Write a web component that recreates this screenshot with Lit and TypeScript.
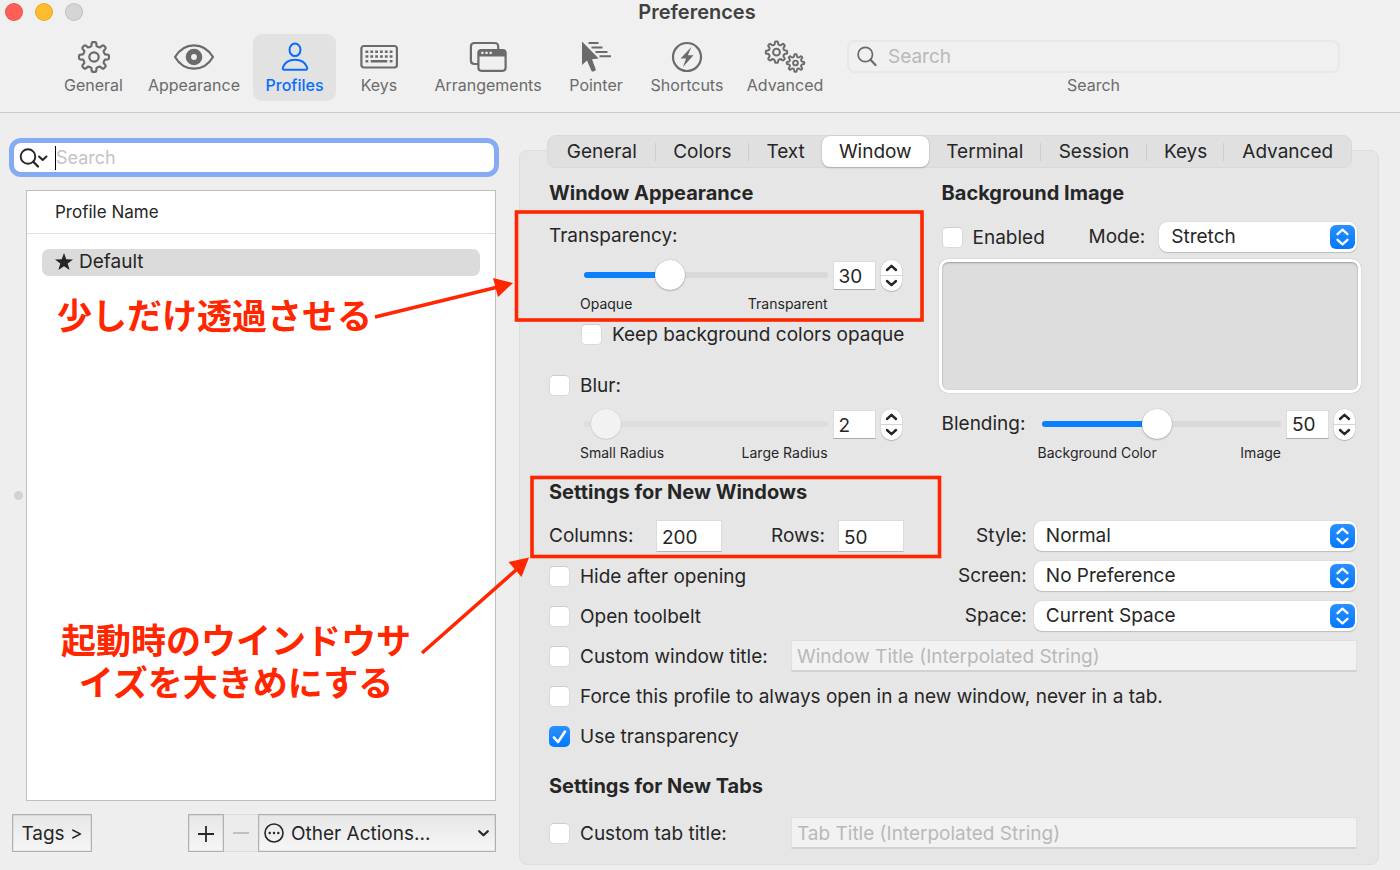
import { LitElement, html, css, svg, nothing, type TemplateResult } from "lit";
import { customElement, property, state } from "lit/decorators.js";
import { classMap } from "lit/directives/class-map.js";
import { styleMap } from "lit/directives/style-map.js";

/** Outline of a cog wheel with rounded teeth. */
function gear(cx: number, cy: number, outer: number, inner: number, teeth = 8): string {
  const step = (Math.PI * 2) / teeth;
  const at = (r: number, a: number) => `${(cx + r * Math.sin(a)).toFixed(2)} ${(cy - r * Math.cos(a)).toFixed(2)}`;
  let d = "";
  for (let i = 0; i < teeth; i++) {
    const a = i * step;
    d += `${i ? "L" : "M"}${at(inner, a - step * 0.29)}`;
    d += `L${at(outer - 1, a - step * 0.21)}Q${at(outer, a - step * 0.18)} ${at(outer, a - step * 0.1)}`;
    d += `L${at(outer, a + step * 0.1)}Q${at(outer, a + step * 0.18)} ${at(outer - 1, a + step * 0.21)}`;
    d += `L${at(inner, a + step * 0.29)}Q${at(inner - 1, a + step * 0.5)} ${at(inner, a + step * 0.71)}`;
  }
  return d + "Z";
}

const icons: Record<string, TemplateResult> = {
  General: svg`<path d=${gear(22, 17, 15, 11.4)} stroke-width="2.200"/><circle cx="22" cy="17" r="4.700" stroke-width="2.200"/>`,
  Appearance: svg`<path d="M3 17C7.500 9.500 14.500 5.300 22 5.300S36.500 9.500 41 17C36.500 24.500 29.500 28.700 22 28.700S7.500 24.500 3 17Z" stroke-width="2.200"/><circle cx="22" cy="17" r="5.600" stroke-width="5.400"/>`,
  Profiles: svg`<ellipse cx="22" cy="9.800" rx="5.500" ry="6.300" stroke-width="2"/><path d="M11.500 29.800C9.700 29.800 9.500 28.300 10 27C11.800 22.500 16.500 19.800 22 19.800S32.200 22.500 34 27C34.500 28.300 34.300 29.800 32.500 29.800Z" stroke-width="2"/>`,
  Keys: svg`<rect x="4.400" y="6" width="35.500" height="21.500" rx="2.500" stroke-width="2.200"/><path d="M8.500 11.700H35.500M8.500 16.500H35.500" stroke-width="2.600" stroke-dasharray="2.800 2.040"/><path d="M8.500 21.300H11.300M13.700 21.300H30.300M32.700 21.300H35.500" stroke-width="2.400"/>`,
  Arrangements: svg`<path d="M12 24H8.500Q4.900 24 4.900 20.500V6.500Q4.900 3 8.500 3H28.500Q32.200 3 32.200 6.500V9" stroke-width="2.200"/><rect x="12.400" y="10" width="27.200" height="20.800" rx="3" stroke-width="2.200"/><path d="M12.400 16V12.500Q12.400 10 15 10H37Q39.600 10 39.600 12.500V16Z" class="fill"/><path d="M15.300 12.800H25.800" stroke="#f0f0f0" stroke-width="2.200" stroke-dasharray="2.200 1.950"/>`,
  Pointer: svg`<path d="M8 1.500V25L13 20.500L17.500 31Q18.500 32 20 31.300Q22 30.600 21.800 29.500L18 19.200L24.700 18.600Z" class="fill" stroke="none"/><path d="M14.500 3H24.500M17.500 7.500H28.500M21.500 12H33.500M25.500 16.200H37" stroke-width="2.100"/>`,
  Shortcuts: svg`<circle cx="22" cy="17" r="14" stroke-width="2.200"/><path d="M26.300 7L15.500 18.600H21L18 27L28.500 15.300H23Z" class="fill" stroke="none"/>`,
  Advanced: svg`<path d=${gear(13.5, 12.2, 10.7, 8.2)} stroke-width="2"/><circle cx="13.500" cy="12.200" r="3.400" stroke-width="2"/><path d=${gear(32.5, 23, 8.8, 6.6)} stroke-width="1.900"/><circle cx="32.500" cy="23" r="2.400" stroke-width="1.900"/>`,
};

const base = css`
  * { box-sizing: border-box; }
  button, input, select { font: inherit; color: inherit; margin: 0; outline: none; }
  button { border: 0; padding: 0; background: none; }
  svg { display: block; fill: none; stroke: currentColor; }
  .fill { fill: currentColor; }
`;

@customElement("pref-check")
class PrefCheck extends LitElement {
  @property() label = "";
  @property({ type: Boolean }) checked = false;
  static styles = [base, css`
    :host { display: flex; align-items: center; height: 24px; }
    label { display: flex; align-items: center; gap: 10px; white-space: nowrap; }
    .box { position: relative; width: 21px; height: 21px; }
    .text { padding-top: 1px; }
    input { appearance: none; display: block; width: 21px; height: 21px; border-radius: 5px; background: #fff; border: 1px solid #d9d9d9; border-top-color: #cdcdcd; }
    input:checked { border: 0; background: linear-gradient(#2b90ff, #0378ff); }
    svg { position: absolute; inset: 0; color: #fff; pointer-events: none; }
  `];
  render() {
    return html`<label><span class="box"><input type="checkbox" .checked=${this.checked}
      @change=${(e: Event) => (this.checked = (e.target as HTMLInputElement).checked)}>
      ${this.checked ? html`<svg width="21" height="21" viewBox="0 0 21 21"><path d="M5 11.500L9 16L16 5.500" stroke-width="2.600" stroke-linecap="round" stroke-linejoin="round"/></svg>` : nothing}
    </span><span class="text">${this.label}</span></label>`;
  }
}

@customElement("pref-select")
class PrefSelect extends LitElement {
  @property() label = "";
  @property({ type: Array }) options: string[] = [];
  static styles = [base, css`
    :host { display: block; position: relative; min-width: 0; }
    select { appearance: none; display: block; width: 100%; height: 30px; padding: 0 36px 1px 12px; border: 0; border-radius: 8px; background: #fff; box-shadow: 0 0 1px rgba(0, 0, 0, .25), 0 1px 1px rgba(0, 0, 0, .16); }
    .arrows { position: absolute; right: 2px; top: 3px; width: 25px; height: 24px; border-radius: 6px; background: linear-gradient(#2b90ff, #0378ff); color: #fff; pointer-events: none; }
  `];
  render() {
    return html`<select aria-label=${this.label}>${this.options.map((o) => html`<option>${o}</option>`)}</select>
      <span class="arrows"><svg width="25" height="24" viewBox="0 0 25 24"><path d="M7.500 9.200L12.500 4.700L17.500 9.200M7.500 14.800L12.500 19.300L17.500 14.800" stroke-width="2.300" stroke-linecap="round" stroke-linejoin="round"/></svg></span>`;
  }
}

@customElement("pref-slider")
class PrefSlider extends LitElement {
  @property() label = "";
  @property() low = "";
  @property() high = "";
  @property() text = "";
  @property({ type: Number }) max = 100;
  @property({ type: Number }) value = 0;
  @property({ type: Boolean }) off = false;
  static styles = [base, css`
    :host { display: grid; grid-template-columns: minmax(0, 1fr) 43px 21px; column-gap: 5px; align-items: center; }
    .range { appearance: none; display: block; width: 100%; height: 32px; background: none; }
    .range::-webkit-slider-runnable-track { height: 6px; border-radius: 3px; background: linear-gradient(to right, #0a80ff var(--fill), #d9d9d9 var(--fill)); }
    .range::-webkit-slider-thumb { appearance: none; width: 30px; height: 30px; margin-top: -12px; border-radius: 50%; background: #fff; box-shadow: 0 0 1px rgba(0, 0, 0, .3), 0 1px 2px rgba(0, 0, 0, .22); }
    .range:disabled::-webkit-slider-runnable-track { background: #dedede; }
    .range:disabled::-webkit-slider-thumb { background: #f2f2f2; box-shadow: 0 0 1px rgba(0, 0, 0, .2), 0 1px 1px rgba(0, 0, 0, .08); }
    .number { width: 43px; height: 29px; margin-top: 1px; padding: 1px 0 0 5px; border: 1px solid #dcdcdc; border-bottom-color: #a9a9a9; background: #fff; }
    .stepper { display: grid; grid-template-rows: 15px 15px; row-gap: 1px; border-radius: 10px; overflow: hidden; background: #d5d5d5; box-shadow: 0 0 1px rgba(0, 0, 0, .3), 0 1px 1px rgba(0, 0, 0, .2); }
    .stepper button { display: grid; place-items: center; background: #fff; }
    .captions { display: flex; justify-content: space-between; height: 16px; margin: 5px 0 0 -4px; font-size: 14px; line-height: 16px; white-space: nowrap; }
  `];
  render() {
    const ratio = this.value / this.max;
    const fill = `calc(15px + (100% - 30px) * ${ratio})`;
    return html`<input class="range" type="range" min="0" step="1" max=${this.max} .value=${String(this.value)} ?disabled=${this.off}
        aria-label=${this.label} style=${styleMap({ "--fill": fill })}
        @input=${(e: Event) => { this.value = +(e.target as HTMLInputElement).value; this.text = String(this.value); }}>
      <input class="number" type="text" aria-label="${this.label} value" .value=${this.text}>
      <span class="stepper">
        <button aria-label="Increase"><svg width="13" height="9" viewBox="0 0 13 9"><path d="M2 7L6.500 2.800L11 7" stroke-width="2.400" stroke-linecap="round" stroke-linejoin="round"/></svg></button>
        <button aria-label="Decrease"><svg width="13" height="9" viewBox="0 0 13 9"><path d="M2 2L6.500 6.200L11 2" stroke-width="2.400" stroke-linecap="round" stroke-linejoin="round"/></svg></button>
      </span>
      <div class="captions"><span>${this.low}</span><span>${this.high}</span></div>`;
  }
}

@customElement("app-root")
class AppRoot extends LitElement {
  @state() private section = "Profiles";
  @state() private tab = "Window";

  static styles = [base, css`
    :host { position: relative; display: flex; flex-direction: column; min-height: 100vh; background: #eee; color: #262626; font: 19px/24px Inter, "Noto Sans CJK JP", sans-serif; }
    ::placeholder { color: #b9b9b9; opacity: 1; }

    .toolbar { background: #f0f0f0; border-bottom: 1px solid #c9c9c9; padding-bottom: 11px; }
    .titlebar { display: grid; grid-template-columns: 90px 1fr 96px; align-items: center; height: 24px; }
    .lights { display: flex; gap: 12px; padding-left: 5px; }
    .light { width: 18px; height: 18px; border-radius: 50%; border: 1px solid rgba(0, 0, 0, .1); }
    .close { background: #ff5f57; }
    .minimize { background: #febc2e; }
    .zoom { background: #d5d5d5; }
    .title { margin: 0; text-align: center; font-size: 20px; line-height: 24px; font-weight: 600; color: #404040; }
    .tools { display: grid; grid-template-columns: 83px 118px 83px 86px 132px 84px 98px 98px minmax(0, 1fr); padding: 10px 60px 0 52px; }
    .tool { display: flex; flex-direction: column; align-items: center; height: 67px; padding-top: 6px; border-radius: 9px; color: #6b6b6b; font-size: 16px; line-height: 20px; }
    .tool svg { margin-bottom: 1px; flex: none; stroke-linejoin: round; }
    .tool.on { background: #e2e2e2; color: #0a6cff; font-weight: 500; }
    .find { display: flex; flex-direction: column; align-items: center; padding: 6px 0 0 13px; color: #6b6b6b; font-size: 16px; line-height: 20px; }
    .findbox { display: flex; align-items: center; gap: 11px; width: 100%; height: 33px; margin-bottom: 2px; padding-left: 8px; border: 2px solid #e8e8e8; border-radius: 8px; }
    .findbox input, .filter input { flex: 1; min-width: 0; height: 24px; padding: 0; border: 0; background: none; }
    .findbox input { font-size: 19px; }
    .filter input { font-size: 18px; }

    .body { flex: 1; display: grid; grid-template-columns: minmax(0, 519fr) minmax(0, 860fr); padding: 0 21px 5px 0; }
    .side { display: flex; flex-direction: column; padding: 25px 20px 13px 9px; }
    .filter { display: flex; align-items: center; height: 39px; border: 5px solid #86abf5; border-radius: 12px; background: #fff; padding-left: 5px; }
    .filter ::placeholder { color: #c4c4c4; }
    .caret { width: 1px; height: 24px; margin-left: 7px; background: #000; }
    .list { flex: 1; display: flex; align-items: center; margin: 13px 3px 13px 5px; }
    .grip { width: 9px; height: 9px; margin-right: 3px; border-radius: 50%; background: #d2d2d2; }
    .sheet { flex: 1; align-self: stretch; border: 1px solid #bfbfbf; background: #fff; }
    table { width: 100%; border-collapse: collapse; }
    th { height: 42px; padding: 0 0 0 28px; border-bottom: 1px solid #dfdfdf; text-align: left; font-size: 17px; font-weight: 400; line-height: 24px; }
    td { padding: 15px 15px 0; }
    .row { display: flex; align-items: center; gap: 5px; height: 27px; padding-left: 12px; border-radius: 7px; background: #dbdbdb; }
    .foot { display: flex; height: 38px; margin: 0 3px; }
    .push, .actions select { padding-top: 1px; border: 1px solid #b0b0b0; background: linear-gradient(#e7e7e7, #f6f6f6); box-shadow: inset 0 0 0 1px rgba(0, 0, 0, .06); }
    .tags { width: 80px; margin-right: auto; }
    .plus { width: 36px; display: grid; place-items: center; }
    .minus { width: 34px; display: grid; place-items: center; color: #b5b5b5; border-top: 1px solid #dcdcdc; border-bottom: 1px solid #dcdcdc; background: #ececec; }
    .actions { position: relative; width: 238px; }
    .actions select { appearance: none; width: 100%; height: 38px; padding: 1px 30px 0 32px; border-radius: 0; }
    .dots, .down { position: absolute; top: 9px; pointer-events: none; }
    .dots { left: 6px; }
    .down { right: 6px; }

    .panel { margin-top: 37px; padding: 0 21px 11px 29px; border: 1px solid #dedede; border-radius: 8px; background: #e6e6e6; }
    .tabs { display: grid; grid-template-columns: 108fr 94fr 73fr 107fr 113fr 106fr 78fr 127fr; height: 33px; margin: -16px 5px 12px -2px; border: 1px solid #d9d9d9; border-radius: 9px; background: #e0e0e0; }
    .tab { position: relative; height: 31px; }
    .tab.sep::after { content: ""; position: absolute; right: 0; top: 7px; width: 1px; height: 18px; background: #cdcdcd; }
    .tab.on { border-radius: 8px; background: #fff; box-shadow: 0 0 1px rgba(0, 0, 0, .25), 0 1px 2px rgba(0, 0, 0, .2); }
    h2 { margin: 0; font-size: 20px; line-height: 26px; font-weight: 700; }
    .pair { display: grid; grid-template-columns: minmax(0, 353fr) minmax(0, 416fr); column-gap: 40px; }
    .label { margin: 18px 0 11px; }
    .indent { margin-left: 35px; }
    .keep { margin: 10px 0 27px 32px; white-space: nowrap; }
    .blur { margin-bottom: 11px; }
    .mode { display: grid; grid-template-columns: 147px auto minmax(0, 1fr); align-items: center; margin-top: 16px; }
    .mode span { margin-right: 14px; }
    .well { height: 134px; margin: 7px -4px 15px -3px; border: 3px solid #fff; border-radius: 9px; background: #ddd; box-shadow: 0 0 1px rgba(0, 0, 0, .35), inset 0 1px 2px rgba(0, 0, 0, .3); }
    .blend { display: grid; grid-template-columns: 100px minmax(0, 1fr); padding-right: 2px; line-height: 32px; }
    .windows { display: grid; grid-template-columns: minmax(0, 1fr) auto 40%; column-gap: 7px; grid-auto-rows: 40px; align-items: center; margin: 11px 0 0; white-space: nowrap; }
    .windows .name { text-align: right; }
    .size { display: flex; align-items: center; }
    .size .cols { width: 107px; }
    .size .rows { width: 67px; margin-left: 49px; }
    .size input { width: 66px; height: 32px; padding: 2px 5px 0; border: 1px solid #dcdcdc; border-bottom-color: #b5b5b5; background: #fff; }
    .line { height: 40px; display: grid; grid-template-columns: 242px minmax(0, 1fr); align-items: center; }
    .line input { height: 32px; width: 100%; padding: 2px 5px 0; border: 1px solid #e0e0e0; border-bottom: 2px solid #d2d2d2; background: #f2f2f2; }
    .newwin { margin-top: 18px; }
    .newtab { margin: 17px 0 14px; }

    .marks { position: absolute; left: 0; top: 0; pointer-events: none; color: #ff2600; }
    .note { position: absolute; margin: 0; color: #ff2600; font-family: "Noto Sans CJK JP", sans-serif; font-size: 35px; line-height: 42px; font-weight: 700; text-align: center; white-space: nowrap; }
    .one { left: 57px; top: 293px; }
    .two { left: 61px; top: 618px; }
  `];

  private field(label: string, placeholder: string) {
    return html`<div class="line"><pref-check label=${label}></pref-check><input type="text" aria-label=${label} placeholder=${placeholder}></div>`;
  }

  render() {
    const tabs = ["General", "Colors", "Text", "Window", "Terminal", "Session", "Keys", "Advanced"];
    const active = tabs.indexOf(this.tab);
    return html`
      <header class="toolbar">
        <div class="titlebar">
          <div class="lights"><span class="light close"></span><span class="light minimize"></span><span class="light zoom"></span></div>
          <h1 class="title">Preferences</h1>
        </div>
        <nav class="tools">
          ${Object.keys(icons).map((name) => html`<button class=${classMap({ tool: true, on: name === this.section })} @click=${() => (this.section = name)}>
            <svg width="44" height="34" viewBox="0 0 44 34">${icons[name]}</svg>${name}</button>`)}
          <div class="find">
            <div class="findbox"><svg width="20" height="21" viewBox="0 0 20 21"><circle cx="8.300" cy="8.500" r="7.200" stroke-width="1.700"/><path d="M13.500 13.700L18.500 19" stroke-width="2.200" stroke-linecap="round"/></svg>
              <input id="find" type="text" placeholder="Search"></div>
            <label for="find">Search</label>
          </div>
        </nav>
      </header>

      <main class="body">
        <section class="side">
          <div class="filter">
            <svg width="29" height="22" viewBox="0 0 29 22"><circle cx="9" cy="9.500" r="7.300" stroke-width="1.900"/><path d="M14.300 14.800L19 19.500" stroke-width="2.300" stroke-linecap="round"/><path d="M20 9.500L23.700 13L27.500 9.500" stroke-width="2" stroke-linecap="round" stroke-linejoin="round"/></svg>
            <span class="caret"></span><input type="text" aria-label="Search profiles" placeholder="Search">
          </div>
          <div class="list">
            <span class="grip"></span>
            <div class="sheet"><table>
              <thead><tr><th>Profile Name</th></tr></thead>
              <tbody><tr><td><div class="row"><svg width="20" height="20" viewBox="0 0 20 20"><path class="fill" stroke="none" d="M10 1L12.300 7.300L19 7.500L13.700 11.600L15.600 18L10 14.200L4.400 18L6.300 11.600L1 7.500L7.700 7.300Z"/></svg>Default</div></td></tr></tbody>
            </table></div>
          </div>
          <div class="foot">
            <button class="push tags">Tags &gt;</button>
            <button class="push plus" aria-label="Add profile"><svg width="18" height="18" viewBox="0 0 18 18"><path d="M9 1V17M1 9H17" stroke-width="1.800"/></svg></button>
            <button class="minus" aria-label="Remove profile" disabled><svg width="18" height="18" viewBox="0 0 18 18"><path d="M1 9H17" stroke-width="1.600"/></svg></button>
            <div class="actions">
              <select aria-label="Other Actions"><option>Other Actions...</option></select>
              <svg class="dots" width="20" height="20" viewBox="0 0 20 20"><circle cx="10" cy="10" r="9" stroke-width="1.600"/><path d="M5.700 10H5.710M10 10H10.010M14.300 10H14.310" stroke-width="2.400" stroke-linecap="round"/></svg>
              <svg class="down" width="13" height="20" viewBox="0 0 13 20"><path d="M2.200 8.200L6.500 12.300L10.800 8.200" stroke-width="2.200" stroke-linecap="round" stroke-linejoin="round"/></svg>
            </div>
          </div>
        </section>

        <section class="panel">
          <div class="tabs" role="tablist">
            ${tabs.map((name, i) => html`<button role="tab" class=${classMap({ tab: true, on: i === active, sep: i !== active && i !== active - 1 && i < tabs.length - 1 })}
              @click=${() => (this.tab = name)}>${name}</button>`)}
          </div>

          <div class="pair">
            <div>
              <h2>Window Appearance</h2>
              <div class="label">Transparency:</div>
              <pref-slider class="indent" label="Transparency" low="Opaque" high="Transparent" text="30" max="90" value="30"></pref-slider>
              <pref-check class="keep" label="Keep background colors opaque"></pref-check>
              <pref-check class="blur" label="Blur:"></pref-check>
              <pref-slider class="indent" label="Blur radius" low="Small Radius" high="Large Radius" text="2" max="64" value="2" off></pref-slider>
            </div>
            <div>
              <h2>Background Image</h2>
              <div class="mode"><pref-check label="Enabled"></pref-check><span>Mode:</span><pref-select label="Mode" .options=${["Stretch", "Tile", "Scale to Fill", "Scale to Fit"]}></pref-select></div>
              <div class="well"></div>
              <div class="blend"><span>Blending:</span><pref-slider label="Blending" low="Background Color" high="Image" text="50" max="100" value="48"></pref-slider></div>
            </div>
          </div>

          <h2 class="newwin">Settings for New Windows</h2>
          <div class="windows">
            <div class="size"><label class="cols" for="cols">Columns:</label><input id="cols" type="text" value="200"><label class="rows" for="rows">Rows:</label><input id="rows" type="text" value="50"></div>
            <span class="name">Style:</span><pref-select label="Style" .options=${["Normal", "Full Screen", "Maximized"]}></pref-select>
            <pref-check label="Hide after opening"></pref-check>
            <span class="name">Screen:</span><pref-select label="Screen" .options=${["No Preference", "Main Screen"]}></pref-select>
            <pref-check label="Open toolbelt"></pref-check>
            <span class="name">Space:</span><pref-select label="Space" .options=${["Current Space", "All Spaces"]}></pref-select>
          </div>
          ${this.field("Custom window title:", "Window Title (Interpolated String)")}
          <div class="line"><pref-check label="Force this profile to always open in a new window, never in a tab."></pref-check></div>
          <div class="line"><pref-check label="Use transparency" checked></pref-check></div>
          <h2 class="newtab">Settings for New Tabs</h2>
          ${this.field("Custom tab title:", "Tab Title (Interpolated String)")}
        </section>
      </main>

      <svg class="marks" width="960" height="700" viewBox="0 0 960 700">
        <rect x="516.500" y="212" width="405.500" height="108" stroke-width="3.600"/>
        <rect x="532" y="477.500" width="407.500" height="79" stroke-width="3.600"/>
        <path d="M375 317L498 287M422 653L516 570" stroke-width="3.600"/>
        <path class="fill" stroke="none" d="M513 283L493 278L498 297ZM529 557.500L508.500 562L521.500 577Z"/>
      </svg>
      <p class="note one">少しだけ透過させる</p>
      <p class="note two">起動時のウインドウサ<br>イズを大きめにする</p>`;
  }
}
